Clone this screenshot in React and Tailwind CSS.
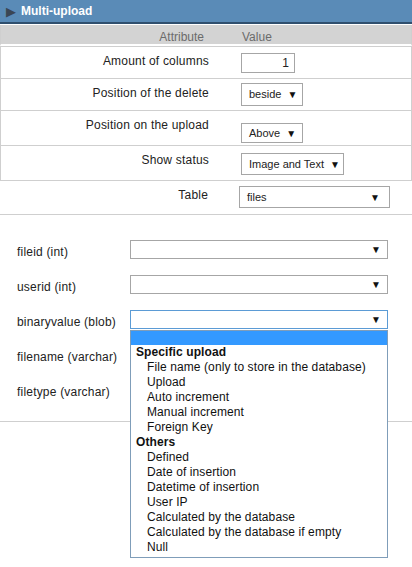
import React from "react";

const font = { fontFamily: '"Liberation Sans", Arial, sans-serif' };

function Box({ w, h = "h-[23px]", text, className = "" }) {
  return (
    <div
      className={`flex items-center justify-between gap-[6px] whitespace-nowrap border border-[#a6a6a6] bg-white pl-[7px] pr-[9px] text-[11px] text-[#222] ${w} ${h} ${className}`}
    >
      <span>{text}</span>
      <span className="text-[10px] text-[#111]">▼</span>
    </div>
  );
}

function Row({ label, children, sides = true, h = "h-[34px]" }) {
  return (
    <div
      className={`flex border-b border-[#cfcfcf] ${sides ? "border-x" : ""} ${h}`}
    >
      <div className="w-[215px] shrink-0 pt-[5px] pr-[7px] text-right text-[12px] tracking-[0.2px] text-[#222]">
        {label}
      </div>
      <div className="pl-[25px] pt-[6px]">{children}</div>
    </div>
  );
}

function FieldRow({ label, focus, children }) {
  return (
    <div className="flex h-[35px] items-start">
      <div className="w-[130px] shrink-0 pl-[17px] pt-[3px] text-[12px] tracking-[0.2px] text-[#222]">
        {label}
      </div>
      {children || (
        <div
          className={`flex h-[19px] w-[258px] items-center justify-end border bg-white pr-[6px] ${
            focus ? "border-[#5b9bd5]" : "border-[#a6a6a6]"
          }`}
        >
          <span className="text-[10px] text-[#111]">▼</span>
        </div>
      )}
    </div>
  );
}

const items = [
  { t: "Specific upload", g: true },
  { t: "File name (only to store in the database)" },
  { t: "Upload" },
  { t: "Auto increment" },
  { t: "Manual increment" },
  { t: "Foreign Key" },
  { t: "Others", g: true },
  { t: "Defined" },
  { t: "Date of insertion" },
  { t: "Datetime of insertion" },
  { t: "User IP" },
  { t: "Calculated by the database" },
  { t: "Calculated by the database if empty" },
  { t: "Null" },
];

export default function App() {
  return (
    <div className="relative h-[567px] w-[412px] overflow-hidden bg-white" style={font}>
      <div className="flex h-[24px] items-center gap-[5px] border-b-2 border-[#2f4f6e] bg-[#5a8bb7] pl-[6px]">
        <span className="text-[13px] leading-none text-[#3a4654]">▶</span>
        <span className="text-[12px] font-bold text-white">Multi-upload</span>
      </div>
      <div className="mt-[1px] flex h-[21px] border-b-[2px] border-b-white bg-[#d3d3d3] border-x border-x-[#cfcfcf]">
        <div className="w-[215px] shrink-0 pr-[12px] pt-[3px] text-right text-[12px] text-[#6b6b6b]">
          Attribute
        </div>
        <div className="pl-[26px] pt-[3px] text-[12px] text-[#6b6b6b]">Value</div>
      </div>
      <div className="border-t border-[#cfcfcf]" />
      <Row label="Amount of columns" h="h-[32px]">
        <div className="flex h-[20px] w-[54px] items-center justify-end border border-[#a6a6a6] pr-[5px] text-[12px] text-[#222]">
          1
        </div>
      </Row>
      <Row label="Position of the delete" h="h-[32px]">
        <Box w="w-[62px]" text="beside" className="mt-[-2px]" />
      </Row>
      <Row label="Position on the upload" h="h-[35px]">
        <Box w="w-[62px]" h="h-[20px]" text="Above" className="mt-[6px]" />
      </Row>
      <Row label="Show status" h="h-[35px]">
        <Box w="w-[103px]" h="h-[22px]" text="Image and Text" className="mt-[1px]" />
      </Row>
      <Row label="Table" sides={false}>
        <Box w="w-[151px]" h="h-[22px]" text="files" className="mt-[-1px] ml-[-1px]" />
      </Row>
      <div className="h-[25px]" />
      <FieldRow label="fileid (int)" />
      <FieldRow label="userid (int)" />
      <FieldRow label="binaryvalue (blob)" focus />
      <FieldRow label="filename (varchar)">
        <div />
      </FieldRow>
      <FieldRow label="filetype (varchar)">
        <div />
      </FieldRow>
      <div className="h-[6px]" />
      <div className="border-t border-[#cfcfcf]" />

      <div className="absolute left-[130px] top-[330px] w-[258px] border border-[#7f9db9] bg-white pb-[2px]">
        <div className="h-[14px] bg-[#3399ff]" />
        {items.map((it, i) => (
          <div
            key={i}
            className={`h-[15px] text-[12px] leading-[15px] tracking-[0.1px] text-[#111] ${
              it.g ? "pl-[5px] font-bold" : "pl-[16px]"
            }`}
          >
            {it.t}
          </div>
        ))}
      </div>
    </div>
  );
}
